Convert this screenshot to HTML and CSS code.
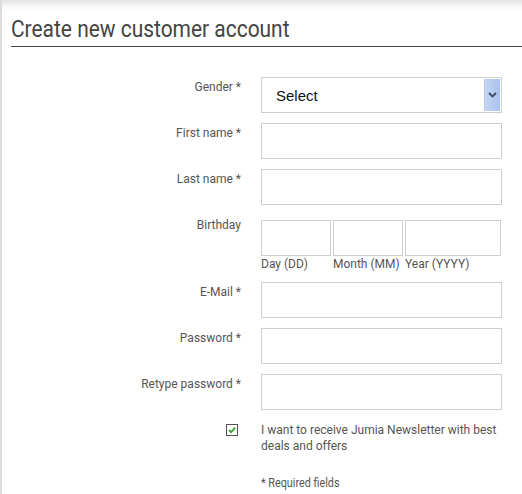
FILE: index.html
```html
<!DOCTYPE html>
<html>
<head>
<meta charset="utf-8">
<link rel="stylesheet" href="styles.css">
</head>
<body>
<div class="page">
  <h1 class="title"><span class="title-text">Create new customer account</span></h1>
  <form class="form">
    <div class="row">
      <label class="label">Gender *</label>
      <div class="select">
        <span class="select-text">Select</span>
        <span class="select-btn">
          <svg width="9" height="6" viewBox="0 0 9 6"><path d="M1 1 L4.5 4.5 L8 1" fill="none" stroke="#3d4a66" stroke-width="1.8"/></svg>
        </span>
      </div>
    </div>
    <div class="row">
      <label class="label">First name *</label>
      <div class="input"></div>
    </div>
    <div class="row row-wide">
      <label class="label">Last name *</label>
      <div class="input"></div>
    </div>
    <div class="row">
      <label class="label label-birth">Birthday</label>
      <div class="birth">
        <div class="birth-field"><div class="input input-day"></div><span class="sub">Day (DD)</span></div>
        <div class="birth-field"><div class="input input-day"></div><span class="sub">Month (MM)</span></div>
        <div class="birth-field"><div class="input input-year"></div><span class="sub">Year (YYYY)</span></div>
      </div>
    </div>
    <div class="row">
      <label class="label">E-Mail *</label>
      <div class="input"></div>
    </div>
    <div class="row">
      <label class="label">Password *</label>
      <div class="input"></div>
    </div>
    <div class="row">
      <label class="label">Retype password *</label>
      <div class="input"></div>
    </div>
    <div class="row row-check">
      <div class="check-cell">
        <span class="checkbox">
          <svg width="10" height="10" viewBox="0 0 10 10"><path d="M2 5 L4.2 7.2 L8.2 2.6" fill="none" stroke="#3aa53a" stroke-width="1.8"/></svg>
        </span>
      </div>
      <p class="check-text">I want to receive Jumia Newsletter with best deals and offers</p>
    </div>
    <div class="row row-req">
      <div></div>
      <p class="req"><span class="req-text">* Required fields</span></p>
    </div>
  </form>
</div>
</body>
</html>
```

FILE: styles.css
```css
html, body {
  margin: 0;
  padding: 0;
  background: #fff;
}
body {
  font-family: Roboto, "Liberation Sans", Arial, sans-serif;
  color: #555;
  width: 522px;
  height: 494px;
  overflow: hidden;
}
.page {
  height: 494px;
  border-left: 2px solid #dcdcdc;
  background: linear-gradient(to bottom, #e4e4e4 0px, #f7f7f7 6px, #ffffff 11px);
  box-sizing: border-box;
  padding-top: 16px;
}
.title {
  margin: 0 0 0 9px;
  font-size: 23px;
  font-weight: 400;
  color: #444;
  line-height: 28px;
  padding-bottom: 2px;
  border-bottom: 1px solid #444;
}
.title-text {
  display: inline-block;
  transform: scaleX(0.91);
  transform-origin: left center;
  white-space: nowrap;
}
.form {
  margin-top: 30px;
  display: flex;
  flex-direction: column;
}
.row {
  display: grid;
  grid-template-columns: 239px 241px;
  column-gap: 20px;
  margin-bottom: 10px;
}
.row-wide {
  margin-bottom: 15px;
}
.label {
  text-align: right;
  font-size: 12px;
  line-height: 16px;
  padding-top: 2px;
  color: #555;
}
.label-birth {
  padding-top: 0;
  margin-top: -3px;
}
.input {
  height: 36px;
  border: 1px solid #cfcfcf;
  box-sizing: border-box;
  background: #fff;
}
.select {
  height: 36px;
  border: 1px solid #cfcfcf;
  box-sizing: border-box;
  display: flex;
  align-items: center;
  justify-content: space-between;
  padding: 1px;
}
.select-text {
  font-family: "Liberation Sans", Arial, sans-serif;
  font-size: 15px;
  color: #111;
  padding-left: 13px;
}
.select-btn {
  width: 15px;
  align-self: stretch;
  background: linear-gradient(to right, #c5d6f2, #a8c1ec);
  border-left: 1px solid #b5c8e8;
  display: flex;
  align-items: center;
  justify-content: center;
}
.birth {
  display: flex;
  gap: 2px;
}
.birth-field {
  display: flex;
  flex-direction: column;
}
.input-day {
  width: 70px;
}
.input-year {
  width: 96px;
}
.sub {
  font-size: 12px;
  line-height: 16px;
  color: #555;
  white-space: nowrap;
}
.row-check {
  margin-top: 2px;
  margin-bottom: 0;
}
.check-cell {
  display: flex;
  justify-content: flex-end;
  padding-right: 3px;
  padding-top: 2px;
}
.checkbox {
  width: 12px;
  height: 12px;
  border: 1px solid #555;
  box-sizing: border-box;
  display: flex;
  align-items: center;
  justify-content: center;
  background: #fff;
}
.check-text {
  margin: 0;
  font-size: 12px;
  line-height: 16px;
  color: #555;
  width: 240px;
}
.row-req {
  margin-top: 21px;
}
.req {
  margin: 0;
  font-size: 12px;
  line-height: 16px;
  color: #555;
}
.req-text {
  display: inline-block;
  transform: scaleX(0.9);
  transform-origin: left center;
  white-space: nowrap;
}
```
